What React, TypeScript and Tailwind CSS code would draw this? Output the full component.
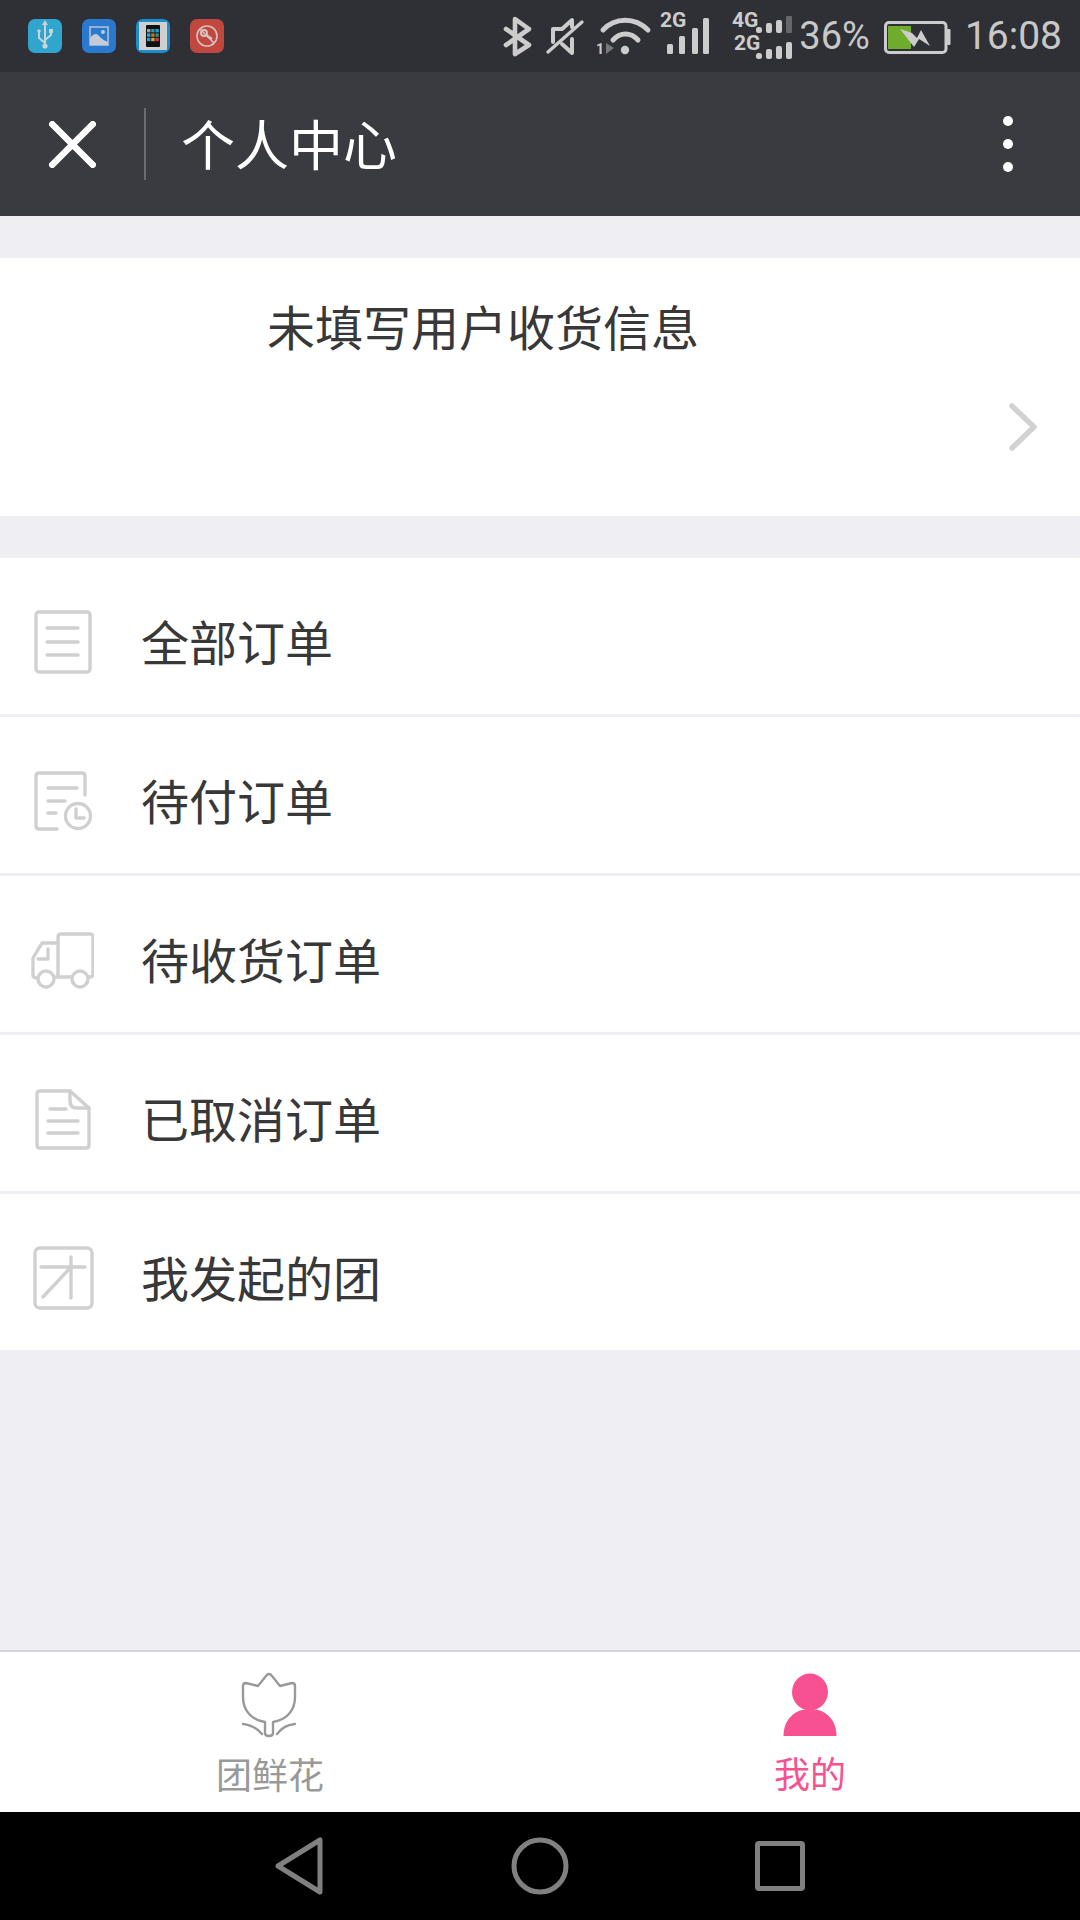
import type { ReactNode } from "react";

const GREY = "#d0d0d0";
const BAR = "#cccccc";

function AppIcon({ bg, children }: { bg: string; children: ReactNode }) {
  return (
    <div className="w-[34px] h-[34px] rounded-[7px] overflow-hidden" style={{ background: bg }}>
      <svg width="34" height="34" viewBox="0 0 34 34">
        {children}
      </svg>
    </div>
  );
}

function StatusBar() {
  const phoneColors = ["#9aa0a6", "#12a5c4", "#2c9bd0", "#1fb5d0", "#d9691e", "#1aa184", "#2c9bd0", "#d9a51e", "#d8324f"];
  return (
    <div className="h-[72px] shrink-0 bg-[#2f3035] flex items-center pl-[28px] font-['Roboto',sans-serif] text-[#c8c8c8]">
      <div className="flex items-center gap-[20px]">
        <AppIcon bg="#30a5cd">
          <g stroke="#c9d3d8" strokeWidth="2" fill="none" strokeLinecap="round">
            <path d="M17 4V28" />
            <path d="M17 24 L11 19 V13" />
            <path d="M17 21 L23 16 V12" />
          </g>
          <path d="M17 1 L20 6 H14 Z" fill="#c9d3d8" />
          <circle cx="17" cy="27" r="2.6" fill="#c9d3d8" />
          <circle cx="11" cy="12" r="1.8" fill="#c9d3d8" />
          <rect x="21" y="10" width="4" height="4" fill="#c9d3d8" />
        </AppIcon>
        <AppIcon bg="#2979cf">
          <rect x="8" y="8" width="18" height="18" fill="none" stroke="#b9c5d3" strokeWidth="1.5" />
          <path d="M8 26 V19 C12 14 15 14 18 18 C20 20 23 22 26 23 V26 Z" fill="#c3ccd6" />
          <circle cx="21" cy="13" r="2" fill="#c3ccd6" />
        </AppIcon>
        <AppIcon bg="#1b8ecb">
          <rect x="3" y="3" width="28" height="28" fill="#cfcfcf" />
          <rect x="10" y="6" width="14" height="22" rx="1" fill="#111111" />
          {phoneColors.map((c, i) => (
            <rect key={c + i} x={11 + (i % 3) * 4.2} y={10 + Math.floor(i / 3) * 4.4} width="3.4" height="3.4" fill={c} />
          ))}
        </AppIcon>
        <AppIcon bg="#c0483f">
          <circle cx="17" cy="17" r="10" fill="none" stroke="#d6c2c0" strokeWidth="1.6" />
          <path d="M10 10 L24 24" stroke="#d6c2c0" strokeWidth="1.5" />
          <circle cx="14" cy="14" r="3" fill="none" stroke="#d6c2c0" strokeWidth="2" />
          <path d="M16 16 L22 20" stroke="#d6c2c0" strokeWidth="2.4" />
        </AppIcon>
      </div>

      <div className="ml-auto flex items-center pr-[18px]">
        {/* bluetooth */}
        <svg className="w-[34px] h-[72px] mr-[10px]" viewBox="500 0 34 72" fill="none" stroke={BAR} strokeWidth="4.6" strokeLinejoin="round" strokeLinecap="round">
          <path d="M505 29 L528 45 L514 54 V19 L528 29 L505 45" />
        </svg>
        {/* muted speaker */}
        <svg className="w-[42px] h-[72px] mr-[7px]" viewBox="545 0 42 72" fill="none" stroke={BAR} strokeWidth="4" strokeLinejoin="round" strokeLinecap="round">
          <path d="M553 42 V29 H562 L572 20 V27" />
          <path d="M572 39 V53 L562 44" />
          <path d="M548 52 L582 22" strokeWidth="3.4" />
        </svg>
        {/* wifi */}
        <svg className="w-[60px] h-[72px] mr-[4px]" viewBox="594 0 60 72" fill="none" stroke={BAR} strokeLinecap="round">
          <path d="M603 30 C615 17 635 17 648 30" strokeWidth="5" />
          <path d="M613 40 C620 32 631 32 638 40" strokeWidth="5" />
          <circle cx="625" cy="50" r="4.2" fill={BAR} stroke="none" />
          <text x="596" y="54" fontSize="14" fontWeight="700" fill={BAR} stroke="none" className="font-['Roboto']">1</text>
          <path d="M606 43 L614 48 L606 54 Z" fill="#77787b" stroke="none" />
        </svg>
        {/* 2G signal */}
        <svg className="w-[54px] h-[72px] mr-[18px]" viewBox="658 0 54 72" fill={BAR}>
          <text x="660" y="27" fontSize="21" fontWeight="700" className="font-['Roboto']">2G</text>
          <rect x="667" y="44" width="6" height="10" rx="1.5" />
          <rect x="679" y="36" width="6" height="18" rx="1.5" />
          <rect x="692" y="28" width="6" height="26" rx="1.5" />
          <rect x="703" y="18" width="6" height="36" rx="1.5" />
        </svg>
        {/* dual sim signal */}
        <svg className="w-[64px] h-[72px] mr-[5px]" viewBox="730 0 64 72" fill={BAR}>
          <text x="732" y="27" fontSize="21" fontWeight="700" className="font-['Roboto']">4G</text>
          <text x="734" y="50" fontSize="21" fontWeight="700" className="font-['Roboto']">2G</text>
          <rect x="756" y="27" width="6" height="6" rx="2.5" />
          <rect x="766" y="23" width="6" height="10" rx="2" />
          <rect x="776" y="20" width="6" height="13" rx="2" />
          <rect x="786" y="16" width="6" height="17" rx="1" fill="#66676a" />
          <rect x="756" y="53" width="6" height="6" rx="2.5" />
          <rect x="766" y="49" width="6" height="10" rx="2" />
          <rect x="776" y="46" width="6" height="13" rx="2" />
          <rect x="786" y="42" width="6" height="17" rx="2" />
        </svg>
        <span className="mr-[13px] text-[38px] leading-none">36%</span>
        {/* battery */}
        <svg className="w-[68px] h-[72px] mr-[14px]" viewBox="884 0 68 72">
          <rect x="886.5" y="22.5" width="60.5" height="30" rx="3.5" fill="none" stroke={BAR} strokeWidth="3" />
          <rect x="948" y="29" width="3.5" height="16" rx="1" fill={BAR} />
          <rect x="889" y="26" width="23" height="23" fill="#6fab2d" />
          <path d="M901 29 L913 33 L918 38 L922 30 L931 46 L920 39 L915 47 Z" fill={BAR} />
        </svg>
        <span className="text-[39px] leading-none">16:08</span>
      </div>
    </div>
  );
}

function TitleBar() {
  return (
    <div className="h-[144px] shrink-0 bg-[#3a3b41] flex items-center">
      <svg className="ml-[49px] w-[47px] h-[47px]" viewBox="0 0 47 47" stroke="#ffffff" strokeWidth="6.5">
        <path d="M1 1 L46 46 M46 1 L1 46" />
      </svg>
      <div className="ml-[48px] w-[2px] h-[72px] bg-[#6b6c70]" />
      <div className="ml-[35px] pb-[2px] text-[54px] leading-none text-white">个人中心</div>
      <div className="ml-auto mr-[67px] flex flex-col gap-[13px]">
        <div className="w-[10px] h-[10px] rounded-full bg-white" />
        <div className="w-[10px] h-[10px] rounded-full bg-white" />
        <div className="w-[10px] h-[10px] rounded-full bg-white" />
      </div>
    </div>
  );
}

const rowIcons: ReactNode[] = [
  <>
    <rect x="6" y="2" width="54" height="60" rx="3" />
    <path d="M17 18 H48 M17 32 H48 M17 45 H48" />
  </>,
  <>
    <path d="M55 26 V7 Q55 4 52 4 H9 Q6 4 6 7 V57 Q6 60 9 60 H27" />
    <path d="M18 19 H47 M18 32 H35 M18 44 H26" />
    <circle cx="48" cy="47" r="12.5" />
    <path d="M46 40 V49 H54" />
  </>,
  <>
    <path d="M28 49 V9 Q28 6 31 6 H60 Q63 6 63 9 V46 Q63 49 60 49 H58" />
    <path d="M42 49 H24" />
    <path d="M28 15 H12 L3 30 V47 Q3 50 7 50 H8" />
    <path d="M18 21 V31 H8" />
    <circle cx="16" cy="51" r="8" />
    <circle cx="50" cy="51" r="8" />
  </>,
  <>
    <path d="M40 4 H10 Q7 4 7 7 V58 Q7 61 10 61 H56 Q59 61 59 58 V21 Z" />
    <path d="M40 4 V14 Q40 21 47 21 H59" />
    <path d="M20 22 H36 M18 34 H48 M18 46 H48" />
  </>,
  <>
    <rect x="5" y="2" width="57" height="60" rx="5" />
    <path d="M11 21 H55 M41 11 V52 M41 21 L13 51" />
  </>,
];

const orders = ["全部订单", "待付订单", "待收货订单", "已取消订单", "我发起的团"];

function OrderRow({ label, icon, last }: { label: string; icon: ReactNode; last: boolean }) {
  return (
    <div className={`flex items-center pt-[12px] pl-[30px] bg-white ${last ? "h-[156px]" : "h-[159px] border-b-[3px] border-[#eeeef3]"}`}>
      <svg className="w-[64px] h-[64px] shrink-0" viewBox="0 0 64 64" fill="none" stroke={GREY} strokeWidth="3.4" strokeLinecap="round" strokeLinejoin="round">
        {icon}
      </svg>
      <span className="ml-[47px] pb-[5px] text-[48px] leading-none text-[#383838]">{label}</span>
    </div>
  );
}

function TabBar() {
  return (
    <div className="h-[162px] shrink-0 bg-white border-t-2 border-[#d6d6da] grid grid-cols-2">
      <div className="flex flex-col items-center pt-[21px]">
        <svg className="w-[56px] h-[64px] overflow-visible" viewBox="0 0 56 64" fill="none" stroke="#999999" strokeWidth="2.4" strokeLinecap="round" strokeLinejoin="round">
          <path d="M24 3 Q27 -1 30 3 L38 13 L50 10 Q53 10 53 13 V24 C53 38 44 47 31 49 V60 C31 64 23 64 23 60 V49 C10 47 1 38 1 24 V13 Q1 10 4 10 L16 13 Z" />
          <path d="M1 51 C10 52 15 55 20 61" />
          <path d="M53 51 C44 52 40 55 35 61" />
        </svg>
        <span className="mt-[18px] text-[36px] leading-none text-[#999999]">团鲜花</span>
      </div>
      <div className="flex flex-col items-center pt-[21px]">
        <svg className="w-[56px] h-[64px]" viewBox="0 0 56 64" fill="#f85192">
          <ellipse cx="28" cy="19" rx="18" ry="18.5" />
          <path d="M1.5 63 C1.5 46 13 36 28 36 C43 36 54.5 46 54.5 63 Z" />
        </svg>
        <span className="mt-[17px] text-[36px] leading-none text-[#f85192]">我的</span>
      </div>
    </div>
  );
}

function NavBar() {
  return (
    <div className="h-[108px] shrink-0 bg-black grid grid-cols-3 px-[180px] items-center">
      <svg className="justify-self-center w-[52px] h-[58px]" viewBox="0 0 52 58" fill="none" stroke="#808080" strokeWidth="5" strokeLinejoin="round">
        <path d="M46 3 V55 L4 29 Z" />
      </svg>
      <svg className="justify-self-center w-[58px] h-[58px]" viewBox="0 0 58 58" fill="none" stroke="#808080" strokeWidth="5">
        <circle cx="29" cy="29" r="26" />
      </svg>
      <svg className="justify-self-center w-[50px] h-[50px]" viewBox="0 0 50 50" fill="none" stroke="#808080" strokeWidth="5" strokeLinejoin="round">
        <rect x="2.5" y="2.5" width="45" height="45" rx="1.5" />
      </svg>
    </div>
  );
}

export default function App() {
  return (
    <div className="w-[1080px] h-[1920px] flex flex-col bg-[#eeeef3] font-['Noto_Sans_CJK_SC',sans-serif]">
      <StatusBar />
      <TitleBar />

      <div className="flex-1 pt-[42px]">
        <div className="h-[258px] bg-white flex flex-col">
          <div className="pl-[267px] pt-[32px] text-[48px] leading-[70px] text-[#383838]">未填写用户收货信息</div>
          <div className="flex justify-end pr-[43px] mt-[43px]">
            <svg className="w-[28px] h-[48px]" viewBox="0 0 28 48" fill="none" stroke="#d2d2d2" strokeWidth="5.5" strokeLinecap="round" strokeLinejoin="round">
              <path d="M3 3 L25 24 L3 45" />
            </svg>
          </div>
        </div>

        <div className="mt-[42px]">
          {orders.map((label, i) => (
            <OrderRow key={label} label={label} icon={rowIcons[i]} last={i === orders.length - 1} />
          ))}
        </div>
      </div>

      <TabBar />
      <NavBar />
    </div>
  );
}
